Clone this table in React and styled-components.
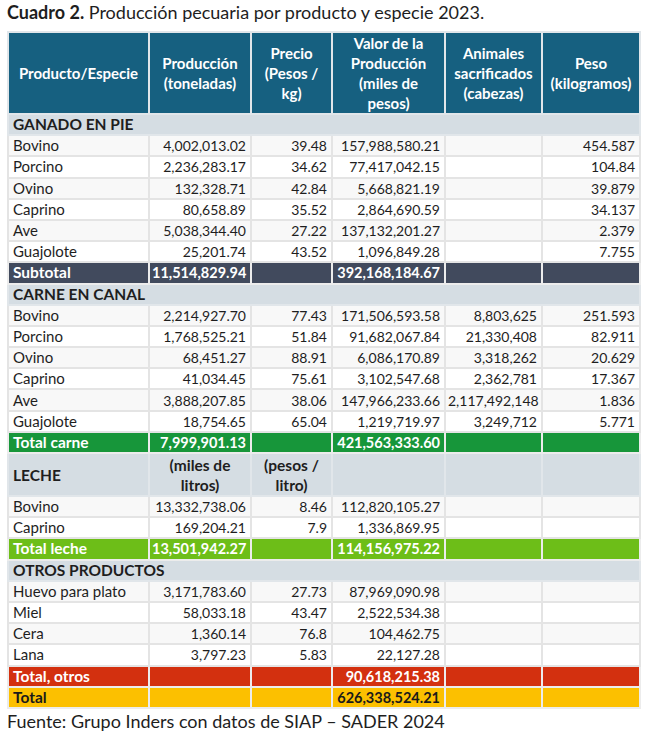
import React from 'react';
import styled, { createGlobalStyle } from 'styled-components';

const GlobalStyle = createGlobalStyle`
  body {
    margin: 0;
    background: #ffffff;
    font-family: Lato, 'Open Sans', sans-serif;
    color: #1e1e1e;
  }
`;

const Page = styled.main`
  padding: 1px 6px 0 7px;
  width: 645px;
  box-sizing: border-box;
`;

const Title = styled.h1`
  margin: 0 0 8px;
  font-size: 18px;
  font-weight: 400;
  line-height: 22px;
  color: #1e1e1e;

  b {
    font-weight: 700;
  }
`;

const Table = styled.table`
  width: 632px;
  border-collapse: collapse;
  table-layout: fixed;
  border: 2px solid #e1e6ea;
`;

const HeadCell = styled.th`
  background: #166080;
  color: #ffffff;
  font-weight: 700;
  font-size: 15px;
  line-height: 20px;
  height: 78px;
  padding: 0 2px;
  text-align: center;
  border: 2px solid #e1e6ea;
`;

const SectionCell = styled.td`
  background: #d5dde3;
  font-weight: 700;
  font-size: 15.5px;
  height: ${(p) => (p.$tall ? '41px' : '19.2px')};
  padding: 0 4px;
  border: 2px solid #e1e6ea;
  text-align: ${(p) => (p.$center ? 'center' : 'left')};
  line-height: ${(p) => (p.$tall ? '20px' : '19px')};
`;

const Cell = styled.td`
  height: 19.2px;
  line-height: 19px;
  padding: 0 4px 0 ${(p) => (p.$left ? '4px' : '2px')};
  border: 2px solid #e4e4e4;
  font-size: ${(p) => (p.$left ? '15px' : '14px')};
  background: ${(p) => (p.$odd ? '#f8f8f8' : '#ffffff')};
  text-align: ${(p) => (p.$left ? 'left' : 'right')};
  white-space: nowrap;
  overflow: hidden;
`;

const totalColors = {
  sub: { bg: '#414a5d', fg: '#ffffff' },
  carne: { bg: '#17963a', fg: '#ffffff' },
  leche: { bg: '#6dbe18', fg: '#ffffff' },
  otros: { bg: '#d3300f', fg: '#ffffff' },
  total: { bg: '#fcc000', fg: '#1a1a1a' },
};

const TotalCell = styled.td`
  height: 19.2px;
  line-height: 19px;
  padding: 0 4px 0 ${(p) => (p.$left ? '4px' : '2px')};
  border: 2px solid #ececec;
  font-weight: 700;
  font-size: ${(p) => (p.$left ? '15.5px' : '14.5px')};
  background: ${(p) => totalColors[p.$variant].bg};
  color: ${(p) => totalColors[p.$variant].fg};
  text-align: ${(p) => (p.$left ? 'left' : 'right')};
  white-space: nowrap;
`;

const Source = styled.p`
  margin: 1px 0 0;
  font-size: 18px;
  line-height: 22px;
  color: #1e1e1e;
`;

const rows = [
  { type: 'section', label: 'GANADO EN PIE' },
  ['Bovino', '4,002,013.02', '39.48', '157,988,580.21', '', '454.587'],
  ['Porcino', '2,236,283.17', '34.62', '77,417,042.15', '', '104.84'],
  ['Ovino', '132,328.71', '42.84', '5,668,821.19', '', '39.879'],
  ['Caprino', '80,658.89', '35.52', '2,864,690.59', '', '34.137'],
  ['Ave', '5,038,344.40', '27.22', '137,132,201.27', '', '2.379'],
  ['Guajolote', '25,201.74', '43.52', '1,096,849.28', '', '7.755'],
  { type: 'total', variant: 'sub', label: 'Subtotal', prod: '11,514,829.94', valor: '392,168,184.67' },
  { type: 'section', label: 'CARNE EN CANAL' },
  ['Bovino', '2,214,927.70', '77.43', '171,506,593.58', '8,803,625', '251.593'],
  ['Porcino', '1,768,525.21', '51.84', '91,682,067.84', '21,330,408', '82.911'],
  ['Ovino', '68,451.27', '88.91', '6,086,170.89', '3,318,262', '20.629'],
  ['Caprino', '41,034.45', '75.61', '3,102,547.68', '2,362,781', '17.367'],
  ['Ave', '3,888,207.85', '38.06', '147,966,233.66', '2,117,492,148', '1.836'],
  ['Guajolote', '18,754.65', '65.04', '1,219,719.97', '3,249,712', '5.771'],
  { type: 'total', variant: 'carne', label: 'Total carne', prod: '7,999,901.13', valor: '421,563,333.60' },
  { type: 'leche' },
  ['Bovino', '13,332,738.06', '8.46', '112,820,105.27', '', ''],
  ['Caprino', '169,204.21', '7.9', '1,336,869.95', '', ''],
  { type: 'total', variant: 'leche', label: 'Total leche', prod: '13,501,942.27', valor: '114,156,975.22' },
  { type: 'section', label: 'OTROS PRODUCTOS' },
  ['Huevo para plato', '3,171,783.60', '27.73', '87,969,090.98', '', ''],
  ['Miel', '58,033.18', '43.47', '2,522,534.38', '', ''],
  ['Cera', '1,360.14', '76.8', '104,462.75', '', ''],
  ['Lana', '3,797.23', '5.83', '22,127.28', '', ''],
  { type: 'total', variant: 'otros', label: 'Total, otros', prod: '', valor: '90,618,215.38' },
  { type: 'total', variant: 'total', label: 'Total', prod: '', valor: '626,338,524.21' },
];

const widths = [141, 102, 81, 113, 97, 98];

const renderRow = (row, i) => {
  if (Array.isArray(row)) {
    const odd = i % 2 === 1;
    return (
      <tr key={i}>
        {row.map((v, j) => (
          <Cell key={j} $left={j === 0} $odd={odd}>
            {v}
          </Cell>
        ))}
      </tr>
    );
  }
  if (row.type === 'section') {
    return (
      <tr key={i}>
        <SectionCell colSpan={6}>{row.label}</SectionCell>
      </tr>
    );
  }
  if (row.type === 'leche') {
    return (
      <tr key={i}>
        <SectionCell $tall>LECHE</SectionCell>
        <SectionCell $center $tall>
          (miles de
          <br />
          litros)
        </SectionCell>
        <SectionCell $center $tall>
          (pesos /
          <br />
          litro)
        </SectionCell>
        <SectionCell $tall />
        <SectionCell $tall />
        <SectionCell $tall />
      </tr>
    );
  }
  return (
    <tr key={i}>
      <TotalCell $variant={row.variant} $left>{row.label}</TotalCell>
      <TotalCell $variant={row.variant}>{row.prod}</TotalCell>
      <TotalCell $variant={row.variant} />
      <TotalCell $variant={row.variant}>{row.valor}</TotalCell>
      <TotalCell $variant={row.variant} />
      <TotalCell $variant={row.variant} />
    </tr>
  );
};

const App = () => {
  return (
    <Page>
      <GlobalStyle />
      <Title>
        <b>Cuadro 2.</b> Producción pecuaria por producto y especie 2023.
      </Title>
      <Table>
        <colgroup>
          {widths.map((w, i) => (
            <col key={i} style={{ width: w }} />
          ))}
        </colgroup>
        <thead>
          <tr>
            <HeadCell>Producto/Especie</HeadCell>
            <HeadCell>
              Producción
              <br />
              (toneladas)
            </HeadCell>
            <HeadCell>
              Precio
              <br />
              (Pesos /
              <br />
              kg)
            </HeadCell>
            <HeadCell>
              Valor de la
              <br />
              Producción
              <br />
              (miles de
              <br />
              pesos)
            </HeadCell>
            <HeadCell>
              Animales
              <br />
              sacrificados
              <br />
              (cabezas)
            </HeadCell>
            <HeadCell>
              Peso
              <br />
              (kilogramos)
            </HeadCell>
          </tr>
        </thead>
        <tbody>{rows.map(renderRow)}</tbody>
      </Table>
      <Source>Fuente: Grupo Inders con datos de SIAP – SADER 2024</Source>
    </Page>
  );
};

export default App;
